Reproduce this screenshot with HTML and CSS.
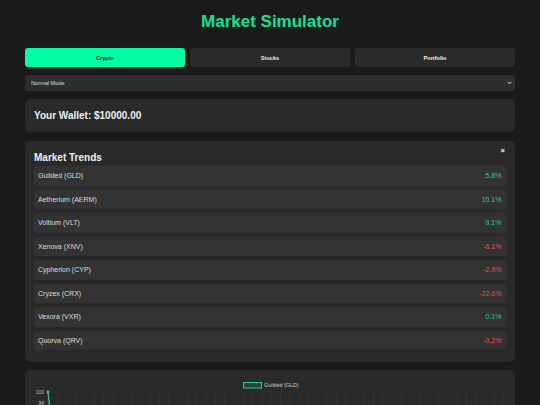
FILE: index.html
```html
<!DOCTYPE html>
<html lang="en">
<head>
<meta charset="utf-8">
<title>Market Simulator</title>
<link rel="stylesheet" href="styles.css">
</head>
<body>
<div class="container">
  <h1 class="title">Market Simulator</h1>
  <div class="tabs">
    <button class="tab active">Crypto</button>
    <button class="tab">Stocks</button>
    <button class="tab">Portfolio</button>
  </div>
  <div class="select">
    <span>Normal Mode</span>
    <svg class="chev" width="5" height="4" viewBox="0 0 5 4"><path d="M0.7 0.8 L2.5 2.8 L4.3 0.8" fill="none" stroke="#ddd" stroke-width="1"/></svg>
  </div>
  <div class="card wallet">Your Wallet: $10000.00</div>
  <div class="card trends">
    <h2 class="card-title">Market Trends</h2>
    <span class="close">×</span>
    <div class="rows">
      <div class="row"><span>Guilded (GLD)</span><span class="up">5.8%</span></div>
      <div class="row"><span>Aetherium (AERM)</span><span class="up">10.1%</span></div>
      <div class="row"><span>Voltium (VLT)</span><span class="up">9.1%</span></div>
      <div class="row"><span>Xenova (XNV)</span><span class="down">-6.1%</span></div>
      <div class="row"><span>Cypherion (CYP)</span><span class="down">-2.9%</span></div>
      <div class="row"><span>Cryzex (CRX)</span><span class="down">-22.6%</span></div>
      <div class="row"><span>Vexora (VXR)</span><span class="up">0.1%</span></div>
      <div class="row"><span>Quorva (QRV)</span><span class="down">-0.2%</span></div>
    </div>
  </div>
  <div class="card chart">
    <svg id="chart" width="490" height="200" viewBox="0 0 490 200"></svg>
  </div>
</div>
<script src="chart.js"></script>
</body>
</html>
```
FILE: chart.js
```js
(function(){
  var svg = document.getElementById('chart');
  var ns = 'http://www.w3.org/2000/svg';
  function el(n, a){ var e = document.createElementNS(ns, n); for (var k in a) e.setAttribute(k, a[k]); svg.appendChild(e); return e; }
  var x0 = 23, step = 9.3, top = 22, rowH = 11;
  for (var i = 0; i < 50; i++) {
    var x = x0 + i * step;
    el('line', {x1:x, y1:top, x2:x, y2:200, stroke:'#383838', 'stroke-width':0.6});
  }
  var xEnd = x0 + 49 * step;
  for (var j = 0; j < 17; j++) {
    var y = top + j * rowH;
    el('line', {x1:x0, y1:y, x2:xEnd, y2:y, stroke:'#383838', 'stroke-width':0.6});
    var t = el('text', {x:19, y:y + 1.8, fill:'#bbb', 'font-size':5, 'text-anchor':'end', 'font-family':'Liberation Sans, Arial, sans-serif'});
    t.textContent = String(100 - j * 2);
  }
  el('rect', {x:218.5, y:12.5, width:18, height:5.5, fill:'rgba(46,204,140,0.15)', stroke:'#2ecc8a', 'stroke-width':1});
  var lg = el('text', {x:239, y:17.3, fill:'#ccc', 'font-size':5.4, 'font-family':'Liberation Sans, Arial, sans-serif'});
  lg.textContent = 'Guilded (GLD)';
  el('polyline', {points:'23,22 25,40 32.3,120', fill:'none', stroke:'#2ecc8a', 'stroke-width':1.3});
  el('circle', {cx:23, cy:22, r:1.4, fill:'#2ecc8a'});
})();
```
FILE: styles.css
```css
* { box-sizing: border-box; }
html, body { margin: 0; padding: 0; }
body {
  background: #1b1b1b;
  color: #eee;
  font-family: "Liberation Sans", Arial, sans-serif;
  overflow: hidden;
}
.container {
  width: 490px;
  margin: 0 auto;
  padding-top: 12px;
  display: flex;
  flex-direction: column;
}
.title {
  margin: 0;
  font-size: 17px;
  line-height: 20px;
  font-weight: bold;
  text-align: center;
  color: #12e391;
}
.tabs {
  margin-top: 16px;
  display: grid;
  grid-template-columns: repeat(3, 1fr);
  gap: 5px;
}
.tab {
  height: 19px;
  border: none;
  border-radius: 3px;
  background: #2a2a2a;
  color: #eee;
  font-family: "Liberation Sans", Arial, sans-serif;
  font-size: 5.6px;
  font-weight: bold;
  padding: 0;
}
.tab.active {
  background: #00ffa3;
  color: #111;
}
.select {
  margin-top: 8px;
  height: 16px;
  background: #2e2e2e;
  border-radius: 3px;
  display: flex;
  align-items: center;
  justify-content: space-between;
  padding: 0 3px 0 6px;
  font-size: 5.6px;
  color: #ddd;
}
.chev { display: block; }
.card {
  background: #2a2a2a;
  border-radius: 5px;
}
.wallet {
  margin-top: 8px;
  height: 33px;
  display: flex;
  align-items: center;
  padding: 0 9px;
  font-size: 10px;
  font-weight: bold;
  color: #f0f0f0;
}
.trends {
  margin-top: 9px;
  height: 221px;
  position: relative;
  padding: 10px 9px 0 9px;
}
.card-title {
  margin: 0;
  font-size: 10px;
  line-height: 13px;
  font-weight: bold;
  color: #f0f0f0;
}
.close {
  position: absolute;
  top: 5px;
  right: 10px;
  font-size: 7.5px;
  font-weight: bold;
  color: #fff;
  line-height: 10px;
}
.rows {
  margin-top: 2px;
  display: flex;
  flex-direction: column;
  gap: 4px;
}
.row {
  height: 19.5px;
  background: #333333;
  border-radius: 3px;
  display: flex;
  align-items: center;
  justify-content: space-between;
  padding: 0 4.5px 0 4px;
  font-size: 7px;
  color: #ddd;
}
.up { color: #2ecc8a; }
.down { color: #e0524a; }
.chart {
  margin-top: 8px;
  height: 200px;
}
.chart svg { display: block; }
```
